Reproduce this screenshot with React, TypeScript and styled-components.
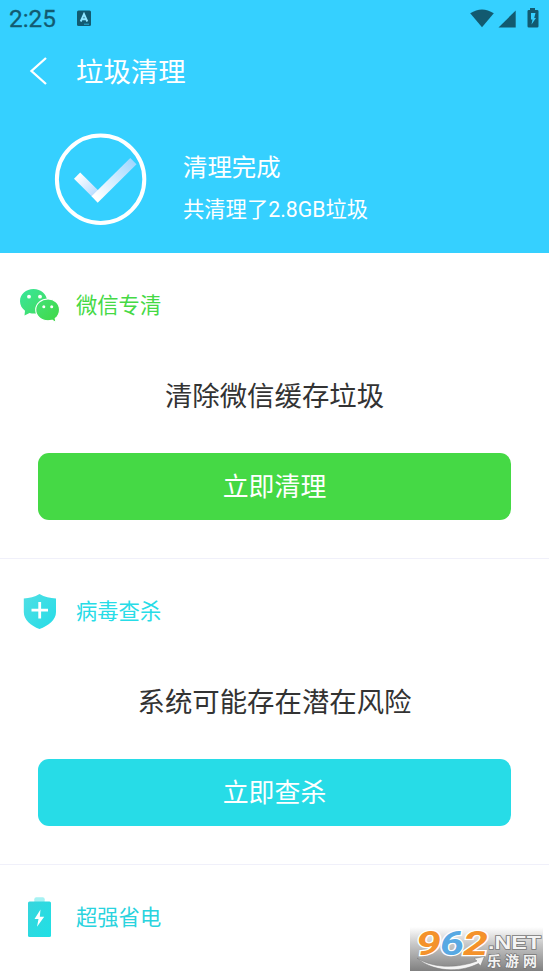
import React from 'react';
import styled, { createGlobalStyle } from 'styled-components';

const GlobalStyle = createGlobalStyle`
  * { box-sizing: border-box; }
  html, body { margin: 0; background: #fff; }
  body { font-family: Roboto, "Noto Sans CJK SC", sans-serif; overflow: hidden; }
`;

const Screen = styled.div`
  position: relative;
  width: 549px;
  height: 977px;
  overflow: hidden;
  background: #fff;
`;

const Header = styled.header`
  height: 253px;
  background: #35d0ff;
  color: #fff;
`;

const StatusBar = styled.div`
  height: 38px;
  padding: 0 8px 0 9px;
  display: flex;
  align-items: center;
  color: #125a70;
`;

const Clock = styled.span`
  width: 67px;
  font-size: 24.3px;
  line-height: 38px;
  font-weight: 400;
  -webkit-text-stroke: 0.3px #125a70;
`;

const StatusIcons = styled.div`
  margin-left: auto;
  display: flex;
  align-items: center;
`;

const TitleBar = styled.div`
  height: 66px;
  padding-left: 29px;
  display: flex;
  align-items: center;
`;

const Title = styled.h1`
  margin: 3px 0 0 28px;
  font-size: 27.4px;
  line-height: 40px;
  font-weight: 400;
`;

const Result = styled.div`
  display: flex;
  padding: 28px 0 0 53px;
`;

const ResultText = styled.div`
  margin: 18px 0 0 35px;
`;

const ResultTitle = styled.div`
  font-size: 24.4px;
  line-height: 36px;
`;

const ResultDetail = styled.div`
  margin-top: 8px;
  font-size: 21.3px;
  line-height: 32px;
`;

const Section = styled.section`
  height: 306px;
  border-bottom: 1px solid #f0f0fa;
`;

const SectionHead = styled.div<{ $color: string }>`
  height: 104px;
  padding-left: 19px;
  display: flex;
  align-items: center;
  gap: 15px;
  color: ${(p) => p.$color};
`;

const SectionName = styled.span`
  padding-top: 2px;
  font-size: 21.3px;
  line-height: 32px;
`;

const Message = styled.p`
  margin: 19px 0 0;
  height: 42px;
  text-align: center;
  font-size: 27.4px;
  line-height: 42px;
  color: #333;
`;

const ActionButton = styled.button<{ $color: string }>`
  display: block;
  width: 473px;
  height: 67px;
  margin: 35px 38px 0;
  padding: 2px 0 0;
  border: 0;
  border-radius: 11px;
  background: ${(p) => p.$color};
  color: #fff;
  font-family: inherit;
  font-size: 25.9px;
  line-height: 65px;
`;

const Watermark = styled.div`
  position: absolute;
  left: 410px;
  top: 917px;
  width: 133px;
  height: 54px;
  background: linear-gradient(#fff 10px, #c8c8c8 27px, #808080);
`;

const WechatIcon = () => (
  <svg width="42" height="42" viewBox="0 0 42 42">
    <defs>
      <linearGradient id="wechatBack" x1="0" y1="0" x2="1" y2="1">
        <stop offset="0" stopColor="#38e69b" />
        <stop offset="1" stopColor="#43dc5d" />
      </linearGradient>
      <linearGradient id="wechatFront" x1="0" y1="0" x2="1" y2="1">
        <stop offset="0" stopColor="#43e278" />
        <stop offset="1" stopColor="#3fd843" />
      </linearGradient>
    </defs>
    <path d="M14.500 5C7 5 1 10 1 17.200c0 4 2 7.200 5 9.500L5.500 31.500l5-2.500c2 .5 4 .7 7 .5L28 17c0-7-6-12-13.500-12z" fill="url(#wechatBack)" />
    <circle cx="10" cy="12.700" r="1.900" fill="#fff" />
    <circle cx="21" cy="12.700" r="1.900" fill="#fff" />
    <path d="M29 15c-6.800 0-12.300 4.600-12.300 10.800S22.200 36.700 29 36.700c1.500 0 2.700-.2 4-.5l4 2.200-.8-3.900c2.800-2 4.300-5.200 4.300-8.700C40.500 19.600 35.600 15 29 15z" fill="url(#wechatFront)" stroke="#fff" strokeWidth="1.100" />
    <circle cx="24.800" cy="22.700" r="1.500" fill="#fff" />
    <circle cx="32.700" cy="22.700" r="1.500" fill="#fff" />
  </svg>
);

const ShieldIcon = () => (
  <svg width="42" height="42" viewBox="0 0 42 42">
    <defs>
      <linearGradient id="shield" x1="0" y1="0" x2="1" y2="1">
        <stop offset="0" stopColor="#50dfe4" />
        <stop offset="1" stopColor="#24dce7" />
      </linearGradient>
    </defs>
    <path d="M20.500 4C15.500 7 10.500 8.200 4.800 8.400V22c0 8 7 13.700 15.700 17C29.500 35.700 37 30 37 22V8.400C31 8.200 25.500 7 20.500 4z" fill="url(#shield)" />
    <path d="M20.700 12v16.500M12.500 20.200H29" stroke="#fff" strokeWidth="2.800" />
  </svg>
);

const BatteryIcon = () => (
  <svg width="42" height="42" viewBox="0 0 42 42">
    <defs>
      <linearGradient id="battery" x1="0" y1="0" x2="1" y2="1">
        <stop offset="0" stopColor="#38d5dd" />
        <stop offset="1" stopColor="#1fe0e5" />
      </linearGradient>
    </defs>
    <path d="M15.300 6V3.300q0-2 2-2h6.400q2 0 2 2V6z" fill="#a6f2f3" />
    <rect x="9" y="5.500" width="23" height="35.500" rx="1.500" fill="url(#battery)" />
    <path d="M21.500 13.500L15.500 23h4l-1.500 7.700 7.200-9.900h-4.400z" fill="#fff" />
  </svg>
);

const DoneIcon = () => (
  <svg width="95" height="95" viewBox="0 0 95 95">
    <defs>
      <linearGradient id="tickShort" x1="22" y1="45" x2="42" y2="66" gradientUnits="userSpaceOnUse">
        <stop offset="0" stopColor="#fff" />
        <stop offset="1" stopColor="#b3d9ff" />
      </linearGradient>
      <linearGradient id="tickLong" x1="44" y1="66" x2="80" y2="30" gradientUnits="userSpaceOnUse">
        <stop offset="0" stopColor="#fff" />
        <stop offset="1" stopColor="#a3d8ff" />
      </linearGradient>
    </defs>
    <circle cx="47.600" cy="47.200" r="43.700" fill="none" stroke="#fff" strokeWidth="4" />
    <path d="M21 46.800l6.200-6.300 18.100 18-6.200 6.300z" fill="url(#tickShort)" />
    <path d="M38.500 64.300L77.300 26l6.200 6.300-38.800 38.500z" fill="url(#tickLong)" />
  </svg>
);

const sections = [
  { name: '微信专清', color: '#45d945', message: '清除微信缓存垃圾', action: '立即清理', icon: <WechatIcon /> },
  { name: '病毒查杀', color: '#27dce7', message: '系统可能存在潜在风险', action: '立即查杀', icon: <ShieldIcon /> },
];

export default function App() {
  return (
    <Screen>
      <GlobalStyle />
      <Header>
        <StatusBar>
          <Clock>2:25</Clock>
          <svg width="16" height="18" viewBox="0 0 16 18">
            <rect x="1" y="0.500" width="14" height="15.500" rx="1.500" fill="#125a70" />
            <path d="M4.700 11.500L8 4l3.300 7.500M5.700 9.300h4.600" fill="none" stroke="#8fe6ff" strokeWidth="1.900" />
            <path d="M8 14.200h5" stroke="#35d0ff" strokeWidth=".7" />
          </svg>
          <StatusIcons>
            <svg width="72" height="24" viewBox="0 0 72 24" fill="currentColor">
              <path d="M1.200 6.300Q13 -1.400 24.800 6.300L13 20.200z" />
              <path d="M46.700 3.500V20.500H29.500z" />
              <path fillRule="evenodd" d="M61 3V1h5v2h2.200q1.300 0 1.300 1.300v14.900q0 1.300-1.300 1.300h-8.400q-1.300 0-1.300-1.300V4.300q0-1.300 1.300-1.300zM62 6v6.500h1.500l-1 5 4.500-6.500h-1.800L66.500 6z" />
            </svg>
          </StatusIcons>
        </StatusBar>
        <TitleBar>
          <svg width="19" height="30" viewBox="0 0 19 30">
            <path d="M17 2L2.500 15 17 28" fill="none" stroke="#fff" strokeWidth="2.300" />
          </svg>
          <Title>垃圾清理</Title>
        </TitleBar>
        <Result>
          <DoneIcon />
          <ResultText>
            <ResultTitle>清理完成</ResultTitle>
            <ResultDetail>共清理了2.8GB垃圾</ResultDetail>
          </ResultText>
        </Result>
      </Header>
      {sections.map((s) => (
        <Section key={s.name}>
          <SectionHead $color={s.color}>
            {s.icon}
            <SectionName>{s.name}</SectionName>
          </SectionHead>
          <Message>{s.message}</Message>
          <ActionButton $color={s.color}>{s.action}</ActionButton>
        </Section>
      ))}
      <SectionHead $color="#29d3de">
        <BatteryIcon />
        <SectionName>超强省电</SectionName>
      </SectionHead>
      <Watermark>
        <svg width="133" height="54" viewBox="0 0 133 54">
          <g fontFamily="Roboto, sans-serif" fontWeight="700" fontStyle="italic" fontSize="34" stroke="#fff" strokeWidth="2.400" paintOrder="stroke">
            <text x="6" y="38" textLength="25" lengthAdjust="spacingAndGlyphs" fill="#f4922b">9</text>
            <text x="30" y="38" textLength="24" lengthAdjust="spacingAndGlyphs" fill="#58a9e3">6</text>
            <text x="53" y="38" textLength="25" lengthAdjust="spacingAndGlyphs" fill="#f4922b">2</text>
          </g>
          <g fill="#f4f4f4" stroke="#777" strokeWidth="1.400" paintOrder="stroke" fontWeight="700">
            <text x="78" y="32" fontFamily="Liberation Sans, sans-serif" fontSize="18" textLength="53" lengthAdjust="spacingAndGlyphs">.NET</text>
            <text x="77" y="49" fontFamily="Noto Sans CJK SC, sans-serif" fontSize="14" letterSpacing="4">乐游网</text>
          </g>
          <path d="M7 41C24 52 49 51 67 44l-3-2.500 10.500-2-4 9.500-2-2.500C49 56.500 22 54.500 7 41z" fill="#f4f4f4" stroke="#777" strokeWidth=".5" />
        </svg>
      </Watermark>
    </Screen>
  );
}
